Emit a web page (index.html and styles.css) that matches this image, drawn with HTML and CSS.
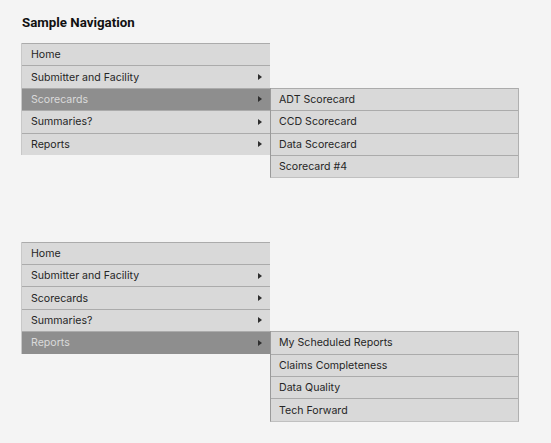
FILE: index.html
```html
<!DOCTYPE html>
<html>
<head>
<meta charset="utf-8">
<link rel="stylesheet" href="styles.css">
</head>
<body>
<h1 class="title">Sample Navigation</h1>
<div class="menus">
  <div class="menu-block">
    <ul class="menu">
      <li class="item">Home</li>
      <li class="item">Submitter and Facility<span class="arrow"></span></li>
      <li class="item active">Scorecards<span class="arrow"></span></li>
      <li class="item">Summaries?<span class="arrow"></span></li>
      <li class="item">Reports<span class="arrow"></span></li>
    </ul>
    <ul class="submenu at-3">
      <li class="item">ADT Scorecard</li>
      <li class="item">CCD Scorecard</li>
      <li class="item">Data Scorecard</li>
      <li class="item">Scorecard #4</li>
    </ul>
  </div>
  <div class="menu-block">
    <ul class="menu">
      <li class="item">Home</li>
      <li class="item">Submitter and Facility<span class="arrow"></span></li>
      <li class="item">Scorecards<span class="arrow"></span></li>
      <li class="item">Summaries?<span class="arrow"></span></li>
      <li class="item active">Reports<span class="arrow"></span></li>
    </ul>
    <ul class="submenu at-5">
      <li class="item">My Scheduled Reports</li>
      <li class="item">Claims Completeness</li>
      <li class="item">Data Quality</li>
      <li class="item">Tech Forward</li>
    </ul>
  </div>
</div>
</body>
</html>
```
FILE: styles.css
```css
html, body {
  margin: 0;
  background: #f4f4f4;
}
body {
  padding: 0 21px 20px;
  font-family: Inter, "Open Sans", sans-serif;
  color: #262626;
}
.title {
  margin: 0;
  padding: 14px 0 0 1px;
  height: 29px;
  font-family: Roboto, sans-serif;
  font-weight: 700;
  font-size: 13.3px;
  line-height: 17px;
  color: #111;
}
.menus {
  display: flex;
  flex-direction: column;
  gap: 63.2px;
}
.menu-block {
  display: flex;
  align-items: flex-start;
}
.menu, .submenu {
  list-style: none;
  margin: 0;
  padding: 0;
  box-sizing: border-box;
}
.menu {
  width: 249px;
  background: #d9d9d9;
  border-left: 1px solid #c8c8c8;
}
.item {
  box-sizing: border-box;
  height: 22.4px;
  padding: 0 8px 0 9px;
  border-top: 1px solid #ababab;
  font-size: 10.6px;
  line-height: 21px;
  background: #d9d9d9;
  color: #262626;
  display: flex;
  align-items: center;
  justify-content: space-between;
}
.item.active {
  background: #8e8e8e;
  color: #dadada;
}
.arrow {
  width: 0;
  height: 0;
  border-top: 3px solid transparent;
  border-bottom: 3px solid transparent;
  border-left: 4px solid #2e2e2e;
}
.submenu {
  width: 248.7px;
  border-left: 1px solid #9a9a9a;
  border-right: 1px solid #b0b0b0;
  border-bottom: 1px solid #c0c0c0;
}
.submenu.at-3 { margin-top: 44.8px; }
.submenu.at-5 { margin-top: 89.6px; }
.submenu .item {
  padding-left: 8px;
}
```
